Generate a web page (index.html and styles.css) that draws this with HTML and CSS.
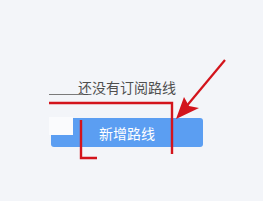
FILE: index.html
```html
<!DOCTYPE html>
<html lang="zh">
<head>
    <meta charset="UTF-8">
    <meta name="viewport" content="width=device-width, initial-scale=1.0">
    <title>订阅路线</title>
    <link rel="stylesheet" href="styles.css">
</head>
<body>
    <div class="page">
        <!-- Empty state -->
        <div class="empty">
            <p class="empty-text">还没有订阅路线</p>
            <button class="add-btn">新增路线</button>
        </div>

        <!-- Screenshot marks -->
        <div class="patch"></div>
        <svg class="marks" width="263" height="201" viewBox="0 0 263 201">
            <line x1="49" y1="94.5" x2="83" y2="94.5" stroke="#7a7a7a" stroke-width="1"/>
            <polyline points="49,103 172,103 172,154" fill="none" stroke="#d3141c" stroke-width="2.4"/>
            <polyline points="81,120 81,158 97,158" fill="none" stroke="#d3141c" stroke-width="2.4"/>
            <line x1="225" y1="60" x2="180" y2="114" stroke="#d3141c" stroke-width="2.2"/>
            <polygon points="176,119 184,97 189,106 199,108" fill="#d3141c"/>
        </svg>
    </div>
</body>
</html>
```

FILE: styles.css
```css
body {
    margin: 0;
    background-color: #f3f5f9;
    font-family: "Noto Sans CJK SC", "Noto Sans", sans-serif;
    overflow: hidden;
}

.page {
    position: relative;
    width: 263px;
    height: 201px;
}

.empty {
    display: flex;
    flex-direction: column;
    align-items: center;
    padding-top: 77px;
    padding-right: 9px;
}

.empty-text {
    margin: 0;
    font-size: 14px;
    line-height: 20px;
    color: #4f4f4f;
}

.add-btn {
    margin-top: 21px;
    width: 152px;
    height: 29px;
    border: none;
    border-radius: 3px;
    background-color: #5b9ef2;
    color: #ffffff;
    font-family: inherit;
    font-size: 14px;
    padding: 0;
}

/* white patch over the button corner */
.patch {
    position: absolute;
    left: 49px;
    top: 117px;
    width: 24px;
    height: 18px;
    background-color: #fafbfd;
}

.marks {
    position: absolute;
    top: 0;
    left: 0;
}
```
